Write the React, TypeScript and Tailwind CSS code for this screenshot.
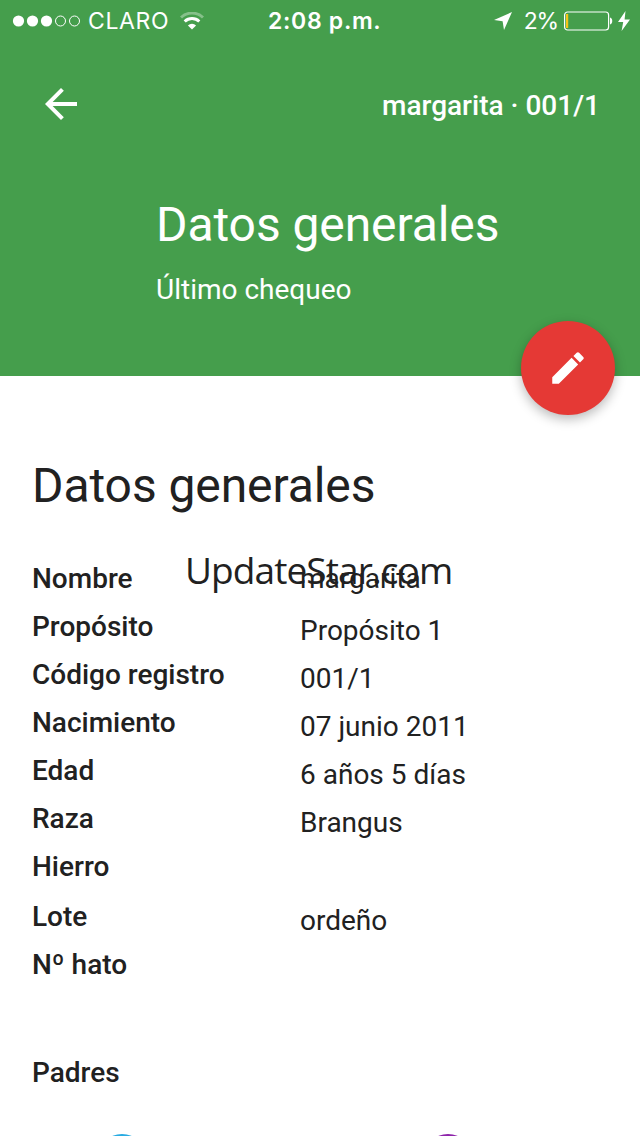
const rows = [
    { label: "Nombre", value: "margarita", valueClass: "" },
    { label: "Propósito", value: "Propósito 1", valueClass: "pt-1" },
    { label: "Código registro", value: "001/1", valueClass: "pt-1" },
    { label: "Nacimiento", value: "07 junio 2011", valueClass: "pt-1" },
    { label: "Edad", value: "6 años 5 días", valueClass: "pt-1" },
    { label: "Raza", value: "Brangus", valueClass: "pt-1" },
    { label: "Hierro", value: "", valueClass: "pt-1" },
    { label: "Lote", value: "ordeño", valueClass: "pt-1" },
    { label: "Nº hato", value: "", valueClass: "pt-1" },
]

const StatusBar = () => {
    return (
        <div className="flex items-center h-10 pt-px pl-3 pr-2 font-[Inter,sans-serif] text-[23px] leading-10">
            <div className="flex items-center w-[256px]">
                <svg width="70" height="14" viewBox="0 0 70 14" fill="#fff">
                    <circle cx="6.5" cy="7" r="5.6" />
                    <circle cx="20.5" cy="7" r="5.6" />
                    <circle cx="34.5" cy="7" r="5.6" />
                    <circle cx="48.5" cy="7" r="5" fill="none" stroke="#fff" strokeWidth="1" />
                    <circle cx="62.5" cy="7" r="5" fill="none" stroke="#fff" strokeWidth="1" />
                </svg>
                <span className="ml-1.5 tracking-[0.6px]">CLARO</span>
                <svg className="ml-[11px]" width="24" height="18" viewBox="0 0 24 18" fill="none">
                    <path d="M1 5.5a16 16 0 0 1 22 0" stroke="#fff" strokeOpacity="0.35" strokeWidth="3" />
                    <path d="M4.7 9.5a10.6 10.6 0 0 1 14.6 0" stroke="#fff" strokeWidth="3" />
                    <path d="M12 17.5L7.9 13.4a5.9 5.9 0 0 1 8.2 0z" fill="#fff" />
                </svg>
            </div>
            <span className="font-semibold tracking-[0.7px]">2:08 p.m.</span>
            <div className="flex items-center ml-auto">
                <svg width="18" height="18" viewBox="0 0 18 18" fill="#fff">
                    <path d="M18 0L10 18L8.6 9.2L0 8z" />
                </svg>
                <span className="ml-3 tracking-[-1.2px]">2%</span>
                <svg className="ml-1.5" width="50" height="20" viewBox="0 0 50 20" fill="none">
                    <rect x="0.6" y="1" width="44" height="18" rx="3" stroke="#fff" strokeWidth="1.2" />
                    <rect x="2" y="3" width="2.2" height="14" fill="#f5c518" />
                    <path d="M46 6.5c3 .8 3 6.2 0 7z" fill="#fff" />
                </svg>
                <svg className="ml-1 mr-0.5" width="12" height="20" viewBox="0 0 12 20" fill="#fff">
                    <path d="M7.5 0L0 11h5.2L3.6 20L12 8.4H6.6z" />
                </svg>
            </div>
        </div>
    )
}

const App = () => {
    return (
        <div className="flex flex-col w-[640px] h-[1136px] overflow-hidden relative bg-white text-[#212121] font-[Roboto,sans-serif] text-[28px]">
            <header className="relative shrink-0 h-[376px] bg-[#459e4c] text-white">
                <StatusBar />
                <nav className="flex items-center justify-between h-12 mt-10 pl-[37px] pr-10">
                    <svg width="48" height="48" viewBox="0 0 24 24" fill="#fff">
                        <path d="M20 11H7.83l5.59-5.59L12 4l-8 8 8 8 1.41-1.41L7.83 13H20v-2z" />
                    </svg>
                    <span className="font-medium mt-1">margarita · 001/1</span>
                </nav>
                <div className="pl-[156px] pt-[69px]">
                    <h1 className="text-5xl leading-[56px] tracking-[-0.08px]">Datos generales</h1>
                    <p className="mt-[17px] leading-10">Último chequeo</p>
                </div>
                <button className="absolute left-[521px] top-[321px] flex items-center justify-center size-[94px] rounded-full bg-[#e53935] shadow-[0_4px_12px_rgba(0,0,0,0.28)]">
                    <svg width="42" height="42" viewBox="0 0 512 512" fill="#fff">
                        <path d="M64 368v80h80l235.7-235.7-80-80L64 368zm377.6-217.6c8.5-8.5 8.5-21.3 0-29.9l-50.1-50.1c-8.5-8.5-21.3-8.5-29.9 0l-39.5 39.5 80 80 39.5-39.5z" />
                    </svg>
                </button>
            </header>

            <main className="px-8 pt-[82px]">
                <h2 className="text-5xl leading-[56px] tracking-[-0.08px]">Datos generales</h2>
                <dl className="mt-[41px]">
                    {rows.map((row) => (
                        <div key={row.label} className={row.label === "Lote" ? "flex h-12 mt-0.5 leading-12" : "flex h-12 leading-12"}>
                            <dt className="w-[268px] font-medium">{row.label}</dt>
                            <dd className={row.valueClass}>{row.value}</dd>
                        </div>
                    ))}
                </dl>
                <h3 className="mt-[60px] font-medium leading-12">Padres</h3>
                <div className="flex gap-[278px] pl-[66px] mt-[37px]">
                    <span className="size-12 rounded-full bg-[#29abe2]" />
                    <span className="size-12 rounded-full bg-[#8e24aa]" />
                </div>
            </main>

            <span className="absolute left-[185px] top-[544px] font-['Open_Sans',sans-serif] text-[37px] leading-[52px] tracking-[-0.9px]">UpdateStar.com</span>
        </div>
    )
}

export default App
